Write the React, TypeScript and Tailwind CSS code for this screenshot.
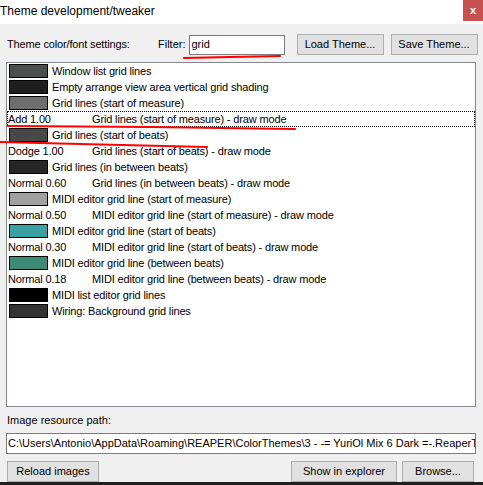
import React from "react";

type Row =
  | { kind: "color"; color: string; label: string }
  | { kind: "mode"; mode: string; label: string; focused?: boolean };

const ROWS: Row[] = [
  { kind: "color", color: "#4b504f", label: "Window list grid lines" },
  { kind: "color", color: "#1e1e1e", label: "Empty arrange view area vertical grid shading" },
  { kind: "color", color: "#6e6e6e", label: "Grid lines (start of measure)" },
  { kind: "mode", mode: "Add 1.00", label: "Grid lines (start of measure) - draw mode", focused: true },
  { kind: "color", color: "#484848", label: "Grid lines (start of beats)" },
  { kind: "mode", mode: "Dodge 1.00", label: "Grid lines (start of beats) - draw mode" },
  { kind: "color", color: "#262626", label: "Grid lines (in between beats)" },
  { kind: "mode", mode: "Normal 0.60", label: "Grid lines (in between beats) - draw mode" },
  { kind: "color", color: "#a0a0a0", label: "MIDI editor grid line (start of measure)" },
  { kind: "mode", mode: "Normal 0.50", label: "MIDI editor grid line (start of measure) - draw mode" },
  { kind: "color", color: "#3aa0a2", label: "MIDI editor grid line (start of beats)" },
  { kind: "mode", mode: "Normal 0.30", label: "MIDI editor grid line (start of beats) - draw mode" },
  { kind: "color", color: "#3e8a79", label: "MIDI editor grid line (between beats)" },
  { kind: "mode", mode: "Normal 0.18", label: "MIDI editor grid line (between beats) - draw mode" },
  { kind: "color", color: "#000000", label: "MIDI list editor grid lines" },
  { kind: "color", color: "#333333", label: "Wiring: Background grid lines" },
];

function WinButton({ children, className = "" }: { children: React.ReactNode; className?: string }) {
  return (
    <button
      className={`h-[21px] border border-[#adadad] bg-[#e1e1e1] text-[11px] text-black flex items-center justify-center ${className}`}
    >
      {children}
    </button>
  );
}

function ListRow({ row }: { row: Row }) {
  if (row.kind === "color") {
    return (
      <div className="h-[16px] flex items-center whitespace-nowrap">
        <div
          className="ml-[2px] w-[39px] h-[14px] border border-black shrink-0"
          style={{ backgroundColor: row.color }}
        />
        <span className="ml-[4px]">{row.label}</span>
      </div>
    );
  }
  return (
    <div
      className={`h-[16px] flex items-center whitespace-nowrap ${
        row.focused ? "border border-dotted border-black" : "border border-transparent"
      }`}
    >
      <span className="w-[84px] shrink-0">{row.mode}</span>
      <span>{row.label}</span>
    </div>
  );
}

export default function App() {
  return (
    <div
      className="relative w-[483px] h-[485px] bg-[#f0f0f0] flex flex-col overflow-hidden text-black text-[11px]"
      style={{ fontFamily: '"Liberation Sans", Arial, sans-serif' }}
    >
      {/* Title bar */}
      <div className="h-[24px] bg-white flex items-start justify-between shrink-0">
        <span className="pt-[4px] text-[12px] leading-[14px]">Theme development/tweaker</span>
        <div className="w-[20px] h-[21px] bg-[#c75050] text-white font-bold text-[11px] flex items-center justify-center">
          x
        </div>
      </div>

      {/* Settings row */}
      <div className="mt-[10px] h-[21px] flex items-center">
        <span className="ml-[7px] w-[151px] tracking-[-0.15px]">Theme color/font settings:</span>
        <span>Filter:</span>
        <div className="ml-[3px] w-[96px] h-[20px] border border-[#7a7a7a] bg-white flex items-center px-[2px]">
          grid
        </div>
        <WinButton className="ml-[12px] w-[87px]">Load Theme...</WinButton>
        <WinButton className="ml-[7px] w-[87px]">Save Theme...</WinButton>
      </div>

      {/* List */}
      <div className="mt-[7px] ml-[6px] w-[470px] h-[347px] border border-[#828790] bg-white flex flex-col overflow-hidden tracking-[-0.15px]">
        {ROWS.map((row, i) => (
          <ListRow key={i} row={row} />
        ))}
      </div>

      {/* Image path */}
      <div className="mt-[6px] ml-[7px] h-[14px] leading-[14px]">Image resource path:</div>
      <div className="mt-[6px] ml-[6px] w-[470px] h-[21px] border border-[#7a7a7a] bg-white flex items-center px-[1px] whitespace-nowrap overflow-hidden">
        C:\Users\Antonio\AppData\Roaming\REAPER\ColorThemes\3 - -= YuriOl Mix 6 Dark =-.ReaperTheme
      </div>
      <div className="mt-[7px] flex items-center">
        <WinButton className="ml-[7px] w-[92px]">Reload images</WinButton>
        <WinButton className="ml-auto w-[106px]">Show in explorer</WinButton>
        <WinButton className="ml-[5px] mr-[9px] w-[72px]">Browse...</WinButton>
      </div>
      <div className="mt-auto h-[3px] bg-[#1f1f1f]" />

      {/* Hand-drawn red annotations */}
      <svg className="absolute left-0 top-0 pointer-events-none" width="483" height="485">
        <path d="M184 58 L230 57 L280 56" stroke="#ff0000" strokeWidth="2.2" fill="none" strokeLinecap="round" />
        <path d="M8 126 L150 127 L295 129" stroke="#ff0000" strokeWidth="2.2" fill="none" strokeLinecap="round" />
        <path d="M0 142 L80 144 L207 147" stroke="#ff0000" strokeWidth="2.2" fill="none" strokeLinecap="round" />
      </svg>
    </div>
  );
}
